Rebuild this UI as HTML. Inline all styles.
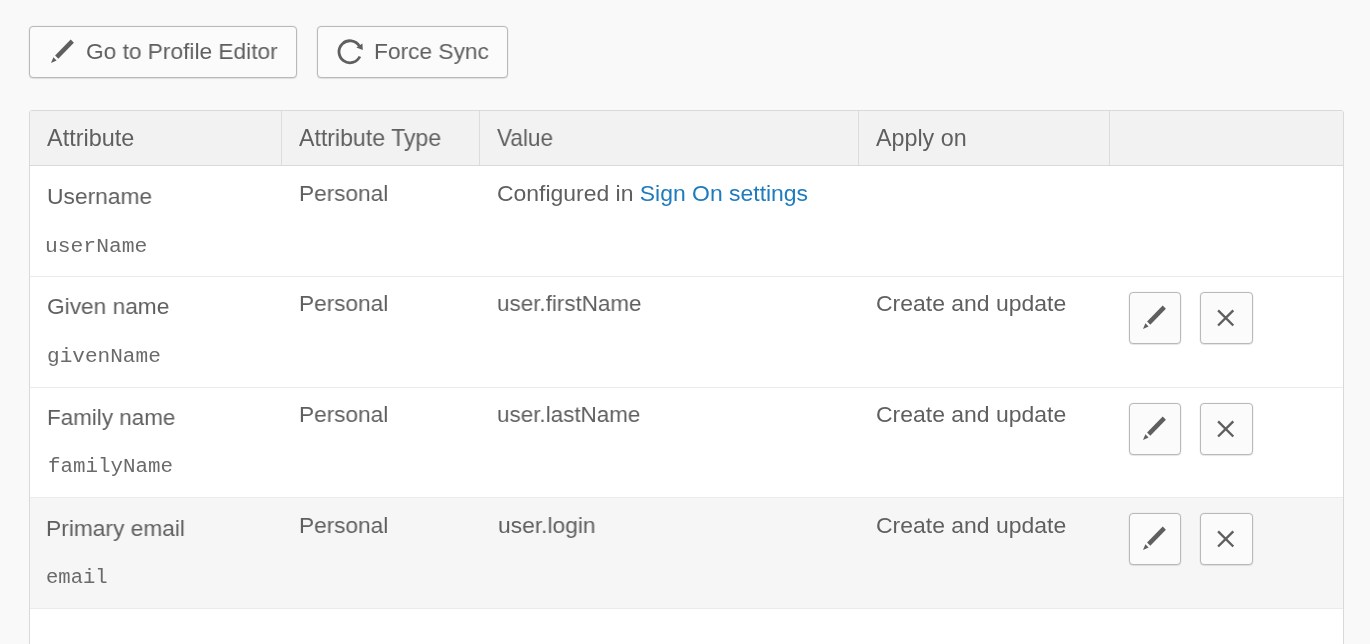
<!DOCTYPE html>
<html>
<head>
<meta charset="utf-8">
<style>
html,body{margin:0;padding:0;}
body{width:1370px;height:644px;overflow:hidden;position:relative;background:#f9f9f9;font-family:"Liberation Sans",sans-serif;color:#5f5f5f;}
.abs{position:absolute;}
.btn{position:absolute;box-sizing:border-box;border:1px solid #b9b9b9;border-radius:4px;background:#fbfbfb;box-shadow:0 0 0 0.6px rgba(0,0,0,0.05),0 1px 1px rgba(0,0,0,0.08);}
.t,.m{will-change:transform;transform-origin:0 0;position:absolute;white-space:nowrap;font-size:22.9px;line-height:26px;}
.m{font-family:"Liberation Mono",monospace;font-size:20.0px;color:#6a6a6a;}
.tbl{position:absolute;left:29px;top:110px;width:1315px;height:560px;box-sizing:border-box;border:1px solid #d9d9d9;border-radius:3px 3px 0 0;background:#fff;}
.hd{position:absolute;left:0;top:0;width:1313px;height:54px;background:#f2f2f2;border-bottom:1px solid #d9d9d9;border-radius:2px 2px 0 0;}
.vd{position:absolute;top:0;width:1px;height:54px;background:#dcdcdc;}
.rw{position:absolute;left:0;width:1313px;border-bottom:1px solid #ebebeb;}
.lnk{color:#1e7bbd;}
</style>
</head>
<body>
<div class="btn" style="left:29px;top:26px;width:268px;height:52px;"></div>
<svg class="abs" style="left:46.00px;top:36.00px" width="34" height="30" viewBox="0 0 34 30"><path d="M24.7 3.5 L27.9 6.75 L12.3 22.8 L9.1 19.4 Z" fill="#5f5f5f"/><path d="M7.4 21.3 L10.6 24.6 L5.0 26.9 Z" fill="#5f5f5f"/></svg>
<div class="btn" style="left:317px;top:26px;width:191px;height:52px;"></div>
<svg class="abs" style="left:332px;top:34px" width="36" height="36" viewBox="0 0 36 36"><path d="M27.9 22.5 A11 11 0 1 1 27.3 11.9" fill="none" stroke="#5f5f5f" stroke-width="2.8"/><path d="M30.4 9.4 L30.8 16.1 L24.3 13.6 Z" fill="#5f5f5f"/></svg>
<div class="tbl">
<div class="hd"><div class="vd" style="left:251px"></div><div class="vd" style="left:449px"></div><div class="vd" style="left:828px"></div><div class="vd" style="left:1079px"></div></div>
<div class="rw" style="top:55px;height:110px;"></div>
<div class="rw" style="top:166px;height:110px;"></div>
<div class="rw" style="top:277px;height:109px;"></div>
<div class="rw" style="top:387px;height:110px;background:#f6f6f6;"></div>
</div>
<div class="btn" style="left:1129px;top:292px;width:52px;height:52px;"></div>
<svg class="abs" style="left:1138.30px;top:301.70px" width="34" height="30" viewBox="0 0 34 30"><path d="M24.7 3.5 L27.9 6.75 L12.3 22.8 L9.1 19.4 Z" fill="#5f5f5f"/><path d="M7.4 21.3 L10.6 24.6 L5.0 26.9 Z" fill="#5f5f5f"/></svg>
<div class="btn" style="left:1200px;top:292px;width:53px;height:52px;"></div>
<svg class="abs" style="left:1210px;top:303px" width="32" height="30" viewBox="0 0 32 30"><path d="M8.1 7.3 L23.3 22.5 M23.3 7.3 L8.1 22.5" stroke="#5f5f5f" stroke-width="2.4" fill="none"/></svg>
<div class="btn" style="left:1129px;top:403px;width:52px;height:52px;"></div>
<svg class="abs" style="left:1138.30px;top:412.70px" width="34" height="30" viewBox="0 0 34 30"><path d="M24.7 3.5 L27.9 6.75 L12.3 22.8 L9.1 19.4 Z" fill="#5f5f5f"/><path d="M7.4 21.3 L10.6 24.6 L5.0 26.9 Z" fill="#5f5f5f"/></svg>
<div class="btn" style="left:1200px;top:403px;width:53px;height:52px;"></div>
<svg class="abs" style="left:1210px;top:414px" width="32" height="30" viewBox="0 0 32 30"><path d="M8.1 7.3 L23.3 22.5 M23.3 7.3 L8.1 22.5" stroke="#5f5f5f" stroke-width="2.4" fill="none"/></svg>
<div class="btn" style="left:1129px;top:513px;width:52px;height:52px;"></div>
<svg class="abs" style="left:1138.30px;top:522.70px" width="34" height="30" viewBox="0 0 34 30"><path d="M24.7 3.5 L27.9 6.75 L12.3 22.8 L9.1 19.4 Z" fill="#5f5f5f"/><path d="M7.4 21.3 L10.6 24.6 L5.0 26.9 Z" fill="#5f5f5f"/></svg>
<div class="btn" style="left:1200px;top:513px;width:53px;height:52px;"></div>
<svg class="abs" style="left:1210px;top:524px" width="32" height="30" viewBox="0 0 32 30"><path d="M8.1 7.3 L23.3 22.5 M23.3 7.3 L8.1 22.5" stroke="#5f5f5f" stroke-width="2.4" fill="none"/></svg>
<div class="t" style="left:86.41px;top:38.06px;transform:scaleX(0.9912);">Go to Profile Editor</div>
<div class="t" style="left:374.11px;top:38.06px;transform:scaleX(0.9929);">Force Sync</div>
<div class="t" style="left:47.40px;top:124.96px;font-size:23.2px;transform:scaleX(1.0105);">Attribute</div>
<div class="t" style="left:299.40px;top:124.96px;font-size:23.2px;transform:scaleX(0.9965);">Attribute Type</div>
<div class="t" style="left:497.41px;top:124.96px;font-size:23.2px;transform:scaleX(0.9722);">Value</div>
<div class="t" style="left:876.00px;top:124.96px;font-size:23.2px;transform:scaleX(1.0046);">Apply on</div>
<div class="t" style="left:46.61px;top:182.56px;transform:scaleX(0.9962);">Username</div>
<div class="m" style="left:45.46px;top:233.68px;transform:scaleX(1.0656);">userName</div>
<div class="t" style="left:298.53px;top:179.56px;transform:scaleX(0.9885);">Personal</div>
<div class="t" style="left:497.00px;top:179.56px;transform:scaleX(1.0019);">Configured in <span class="lnk">Sign On settings</span></div>
<div class="t" style="left:46.61px;top:293.31px;transform:scaleX(0.9910);">Given name</div>
<div class="m" style="left:46.55px;top:343.88px;transform:scaleX(1.0536);">givenName</div>
<div class="t" style="left:298.53px;top:290.31px;transform:scaleX(0.9885);">Personal</div>
<div class="t" style="left:497.41px;top:290.31px;transform:scaleX(0.9795);">user.firstName</div>
<div class="t" style="left:875.70px;top:290.31px;transform:scaleX(1.0032);">Create and update</div>
<div class="t" style="left:46.62px;top:404.06px;transform:scaleX(0.9796);">Family name</div>
<div class="m" style="left:47.96px;top:454.38px;transform:scaleX(1.0410);">familyName</div>
<div class="t" style="left:298.53px;top:401.06px;transform:scaleX(0.9885);">Personal</div>
<div class="t" style="left:497.42px;top:401.06px;transform:scaleX(0.9799);">user.lastName</div>
<div class="t" style="left:875.70px;top:401.06px;transform:scaleX(1.0032);">Create and update</div>
<div class="t" style="left:46.21px;top:514.81px;transform:scaleX(0.9934);">Primary email</div>
<div class="m" style="left:45.97px;top:564.88px;transform:scaleX(1.0282);">email</div>
<div class="t" style="left:298.53px;top:511.81px;transform:scaleX(0.9885);">Personal</div>
<div class="t" style="left:497.51px;top:511.81px;transform:scaleX(0.9949);">user.login</div>
<div class="t" style="left:875.70px;top:511.81px;transform:scaleX(1.0032);">Create and update</div>
</body>
</html>
